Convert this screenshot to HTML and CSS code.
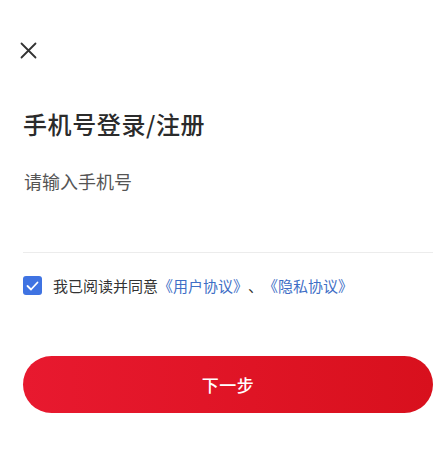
FILE: index.html
```html
<!DOCTYPE html>
<html lang="zh-CN">

<head>
  <meta charset="UTF-8" />
  <meta name="viewport" content="width=device-width, initial-scale=1.0" />
  <title>手机号登录/注册</title>
  <link rel="stylesheet" href="styles.css">
</head>

<body>
  <div class="page">
    <div class="close">
      <svg width="17" height="17" viewBox="0 0 17 17">
        <path d="M1.5 1.5 L15.5 15.5 M15.5 1.5 L1.5 15.5" stroke="#333" stroke-width="1.8" stroke-linecap="round" fill="none" />
      </svg>
    </div>

    <h2 class="title">手机号登录/注册</h2>

    <div class="field">
      <input type="tel" class="phone" placeholder="请输入手机号">
    </div>

    <label class="agree">
      <span class="check">
        <svg width="13" height="10" viewBox="0 0 13 10">
          <path d="M1.5 5 L5 8.5 L11.5 1.5" stroke="#fff" stroke-width="1.8" fill="none" stroke-linecap="round" stroke-linejoin="round" />
        </svg>
      </span>
      <span>我已阅读并同意<a class="link">《用户协议》</a>、<a class="link">《隐私协议》</a></span>
    </label>

    <button class="next">下一步</button>
  </div>
</body>

</html>
```

FILE: styles.css
```css
* {
  box-sizing: border-box;
  margin: 0;
  padding: 0;
  font-family: "Noto Sans CJK SC", "Noto Sans", sans-serif;
}

body {
  background: #fff;
  color: #333;
}

.page {
  padding: 42px 14px 0 23px;
}

.close {
  width: 17px;
  height: 17px;
  margin-left: -3px;
  display: flex;
}

.title {
  margin-top: 48px;
  font-size: 24px;
  font-weight: 500;
  color: #2b2b2b;
  letter-spacing: 0.6px;
  line-height: 34px;
}

.field {
  margin-top: 26px;
  border-bottom: 1px solid #ececec;
  height: 86px;
}

.phone {
  width: 100%;
  border: none;
  outline: none;
  font-size: 18px;
  line-height: 28px;
  color: #333;
  padding-left: 1px;
  background: transparent;
}

.phone::placeholder {
  color: #555;
}

.agree {
  margin-top: 22px;
  display: flex;
  align-items: center;
  gap: 11px;
  font-size: 15px;
  color: #333;
  text-spacing-trim: space-all;
}

.check {
  width: 19px;
  height: 19px;
  border-radius: 3px;
  background: #3f73e2;
  display: flex;
  align-items: center;
  justify-content: center;
}

.link {
  color: #3f6fc6;
}

.next {
  margin-top: 60px;
  width: 410px;
  height: 57px;
  border: none;
  border-radius: 29px;
  background: linear-gradient(90deg, #e8192f, #d8101d);
  color: #fff;
  font-size: 17px;
  font-weight: 500;
  letter-spacing: 0.5px;
}
```
